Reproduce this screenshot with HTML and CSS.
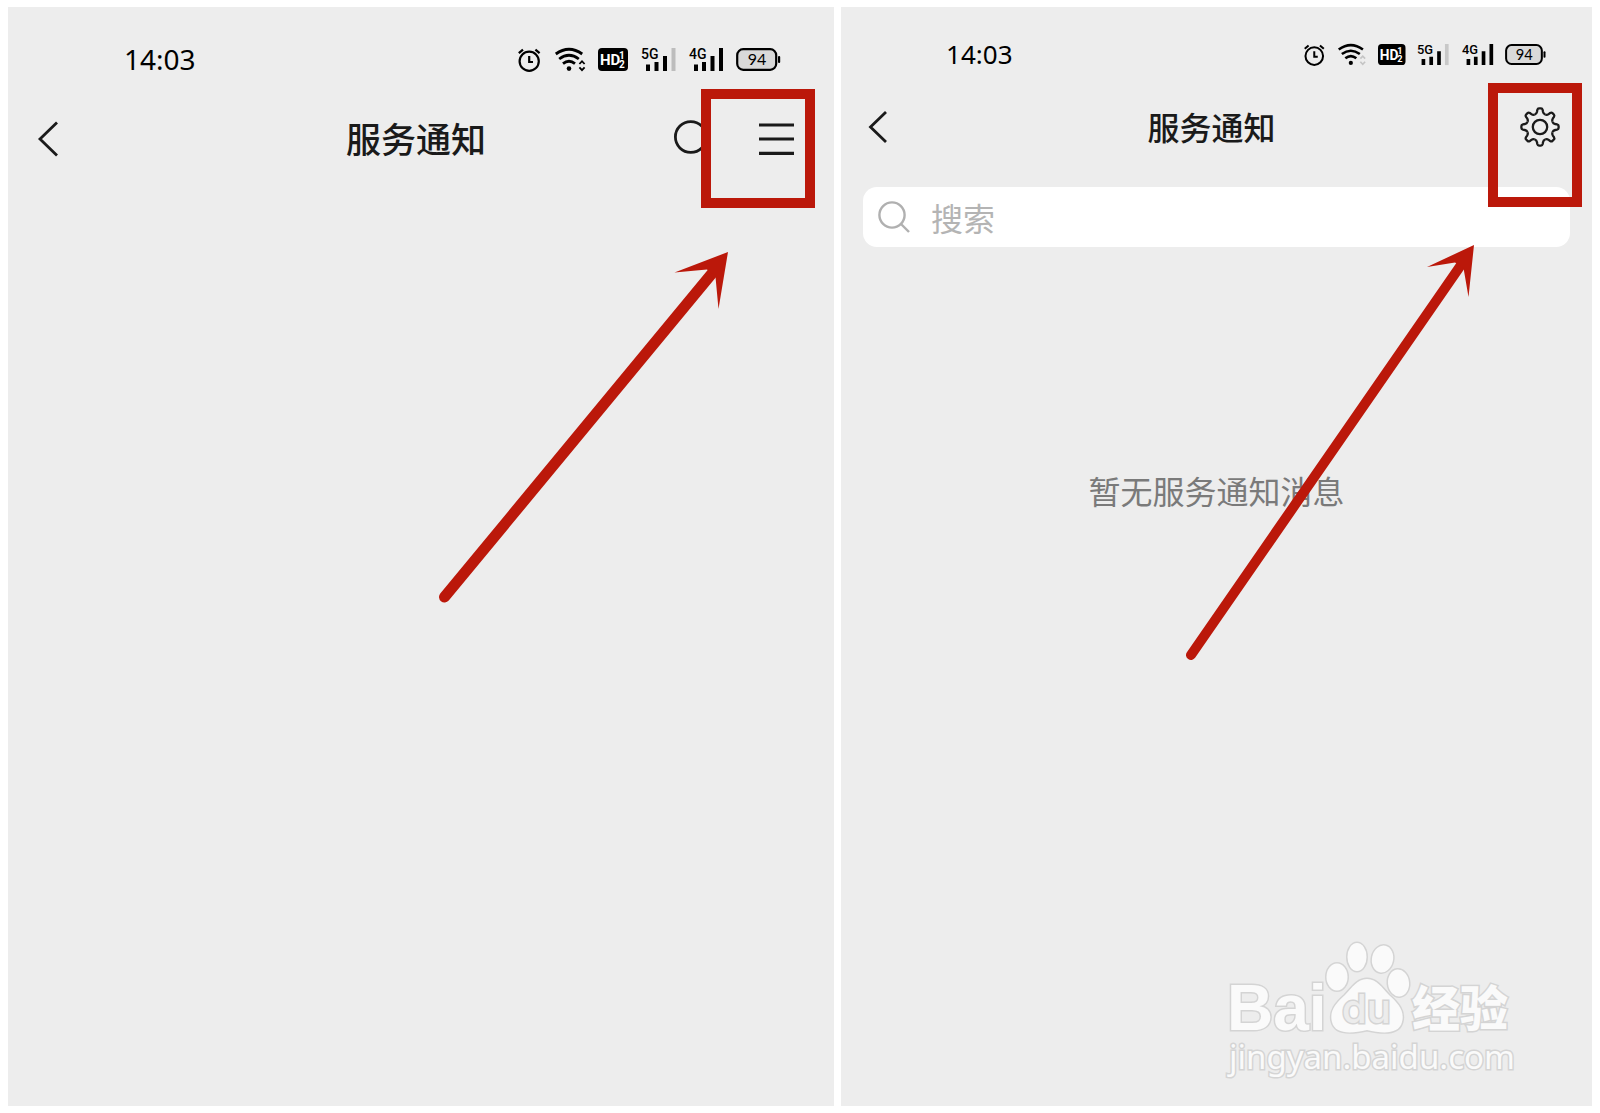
FILE: index.html
```html
<!DOCTYPE html>
<html lang="zh-CN">
  <head>
    <meta charset="UTF-8">
    <meta name="viewport" content="width=device-width, initial-scale=1.0">
    <title>服务通知</title>
    <link rel="stylesheet" href="styles.css">
  </head>
  <body>
    <main class="steps">
      <section class="phone phone-large">
        <div class="status">
          <time>14:03</time>
          <div class="status-icons">
            <svg viewBox="0 0 24 24">
              <g fill="none" stroke="#000" stroke-width="2.2">
                <circle cx="11.2" cy="13.2" r="9.6"/>
                <path d="M0.8 5.2L5 1.6M21.6 5.2L17.4 1.6M11.2 8V14H15"/>
              </g>
            </svg>
            <svg viewBox="0 0 30 24">
              <g fill="none" stroke="#000" stroke-width="2.8">
                <path d="M0.8 6Q14 -3.6 27.2 6M4.2 11Q14 3.6 23.8 11M8 15.6Q14 10.8 20 15.6"/>
                <path stroke-width="1.8" d="M24.4 16L27 13.2L29.6 16M24.4 19.4L27 22.2L29.6 19.4"/>
              </g>
              <circle cx="14" cy="20.6" r="2.3"/>
            </svg>
            <svg viewBox="0 0 30 24">
              <rect width="30" height="23" rx="4"/>
              <g class="glyph-hd">
                <text x="2" y="17" font-size="15">HD</text>
                <text x="21" y="11" font-size="10">1</text>
                <text x="21" y="20" font-size="10">2</text>
              </g>
            </svg>
            <svg viewBox="0 0 35 24">
              <text class="glyph" x="0" y="11" font-size="14">5G</text>
              <path d="M5 16.5h4v6.5h-4zM13.5 14h4v9h-4zM22 8h4v15h-4z"/>
              <path fill="#bdbdbd" d="M30.5 0h4v23h-4z"/>
            </svg>
            <svg viewBox="0 0 34 24">
              <text class="glyph" x="0" y="11" font-size="14">4G</text>
              <path d="M5 16.5h4v6.5h-4zM13 14h4v9h-4zM21.5 8h4v15h-4zM30 0h4v23h-4z"/>
            </svg>
            <svg viewBox="0 0 44 24">
              <rect x="1.2" y="1.2" width="39" height="20.6" rx="6" fill="#d9d9d9" stroke="#000" stroke-width="2.2"/>
              <rect x="42" y="8" width="2.2" height="7" rx="1"/>
              <text class="level" x="21" y="17" text-anchor="middle">94</text>
            </svg>
          </div>
        </div>
        <header class="nav">
          <button class="back" aria-label="返回">
            <svg width="20" height="36" viewBox="0 0 20 36"><path d="M19 1.5L2 18L19 34.5"/></svg>
          </button>
          <h1>服务通知</h1>
          <div class="actions">
            <button aria-label="搜索">
              <svg width="34" height="36" viewBox="0 0 34 36"><circle cx="16.8" cy="16" r="15.4"/><path d="M28 27L33 32"/></svg>
            </button>
            <button aria-label="菜单">
              <svg width="36" height="36" viewBox="0 0 36 36"><path stroke-width="3.2" d="M1 4H36M1 18H36M1 32.4H36"/></svg>
            </button>
          </div>
        </header>
        <div class="mark"></div>
        <svg class="arrow" width="290" height="352" viewBox="0 0 290 352">
          <path class="shaft" d="M6.5 345L276 19"/>
          <path d="M290 0L236.5 20.5L269 17.5L277.5 25L280.5 57Z"/>
        </svg>
      </section>

      <section class="phone phone-small">
        <div class="status">
          <time>14:03</time>
          <div class="status-icons">
            <svg viewBox="0 0 24 24">
              <g fill="none" stroke="#000" stroke-width="2.2">
                <circle cx="11.2" cy="13.2" r="9.6"/>
                <path d="M0.8 5.2L5 1.6M21.6 5.2L17.4 1.6M11.2 8V14H15"/>
              </g>
            </svg>
            <svg viewBox="0 0 30 24">
              <g fill="none" stroke="#000" stroke-width="2.8">
                <path d="M0.8 6Q14 -3.6 27.2 6M4.2 11Q14 3.6 23.8 11M8 15.6Q14 10.8 20 15.6"/>
                <path stroke="#c4c4c4" stroke-width="1.8" d="M24.4 16L27 13.2L29.6 16M24.4 19.4L27 22.2L29.6 19.4"/>
              </g>
              <circle cx="14" cy="20.6" r="2.3"/>
            </svg>
            <svg viewBox="0 0 30 24">
              <rect width="30" height="23" rx="4"/>
              <g class="glyph-hd">
                <text x="2" y="17" font-size="15">HD</text>
                <text x="21" y="11" font-size="10">1</text>
                <text x="21" y="20" font-size="10">2</text>
              </g>
            </svg>
            <svg viewBox="0 0 35 24">
              <text class="glyph" x="0" y="11" font-size="14">5G</text>
              <path d="M5 16.5h4v6.5h-4zM13.5 14h4v9h-4zM22 8h4v15h-4z"/>
              <path fill="#c8c8c8" d="M30.5 0h4v23h-4z"/>
            </svg>
            <svg viewBox="0 0 34 24">
              <text class="glyph" x="0" y="11" font-size="14">4G</text>
              <path d="M5 16.5h4v6.5h-4zM13 14h4v9h-4zM21.5 8h4v15h-4zM30 0h4v23h-4z"/>
            </svg>
            <svg viewBox="0 0 44 24">
              <rect x="1.2" y="1.2" width="39" height="20.6" rx="6" fill="#d9d9d9" stroke="#000" stroke-width="2.2"/>
              <rect x="42" y="8" width="2.2" height="7" rx="1"/>
              <text class="level" x="21" y="17" text-anchor="middle">94</text>
            </svg>
          </div>
        </div>
        <header class="nav">
          <button class="back" aria-label="返回">
            <svg width="24" height="32" viewBox="0 0 24 32"><path d="M23 1L7.5 16L23 31"/></svg>
          </button>
          <h1>服务通知</h1>
          <div class="actions">
            <button aria-label="设置">
              <svg width="40" height="40" viewBox="0 0 40 40">
                <g stroke-width="2.3">
                  <circle cx="20" cy="20" r="7.2"/>
                  <path id="tooth" d="M14.8 7.5Q16.6 6.8 17 4.8L17.3 3Q17.7 1.4 19 1.4H21Q22.3 1.4 22.7 3L23 4.8Q23.4 6.8 25.2 7.5"/>
                  <use href="#tooth" transform="rotate(45 20 20)"/>
                  <use href="#tooth" transform="rotate(90 20 20)"/>
                  <use href="#tooth" transform="rotate(135 20 20)"/>
                  <use href="#tooth" transform="rotate(180 20 20)"/>
                  <use href="#tooth" transform="rotate(225 20 20)"/>
                  <use href="#tooth" transform="rotate(270 20 20)"/>
                  <use href="#tooth" transform="rotate(315 20 20)"/>
                </g>
              </svg>
            </button>
          </div>
        </header>
        <div class="search">
          <label for="keyword" aria-label="搜索">
            <svg width="32" height="32" viewBox="0 0 32 32"><circle cx="13" cy="14" r="12.6"/><path d="M22 23L30 31"/></svg>
          </label>
          <input type="text" id="keyword" name="keyword" placeholder="搜索">
        </div>
        <p class="empty">暂无服务通知消息</p>
        <div class="mark"></div>
        <svg class="arrow" width="290" height="416" viewBox="0 0 290 416">
          <path class="shaft" d="M7 410L277 20"/>
          <path d="M290 0L243 22L271 17.5L279.5 23L284.5 52Z"/>
        </svg>
        <svg class="watermark" width="292" height="146" viewBox="0 0 292 146">
          <text class="wm-bai" x="3" y="92">Bai</text>
          <ellipse cx="113" cy="39" rx="10.5" ry="13.5"/>
          <ellipse cx="133" cy="19" rx="9.5" ry="14"/>
          <ellipse cx="158.5" cy="21" rx="10.5" ry="13.5" transform="rotate(12 158.5 21)"/>
          <ellipse cx="174.5" cy="45" rx="10.5" ry="13.5" transform="rotate(-6 174.5 45)"/>
          <path d="M143 41C153 41 158 50 165 57C174 65 181 73 178 84C175 96 160 96 143 92C126 96 111 96 108 84C105 73 112 65 121 57C128 50 133 41 143 41Z"/>
          <text class="wm-du" x="118" y="85">du</text>
          <text class="wm-cn" x="188" y="88">经验</text>
          <text class="wm-url" x="5" y="131">jingyan.baidu.com</text>
        </svg>
      </section>
    </main>
  </body>
</html>
```
FILE: styles.css
```css
body {
  margin: 0;
  font-family: "Noto Sans", "Noto Sans CJK SC", sans-serif;
  background-color: #fff;
  color: #1a1a1a;
}
svg {
  overflow: visible;
}
.steps {
  display: grid;
  grid-template-columns: 11fr 10fr;
  gap: 7px;
  min-height: 100vh;
  padding: 7px 8px;
  box-sizing: border-box;
}
.phone {
  position: relative;
  background-color: #ededed;
}

/* status bar */
.status {
  display: flex;
  align-items: center;
  justify-content: space-between;
  height: 32px;
  color: #000;
}
.phone-large .status {
  padding: 37px 54px 0 116px;
  font-size: 28px;
}
.phone-small .status {
  padding: 32px 47px 0 105px;
  font-size: 26px;
}
.status time {
  line-height: 32px;
  padding-bottom: 2px;
}
.status-icons {
  display: flex;
}
.phone-large .status-icons {
  gap: 13px;
}
.phone-small .status-icons {
  gap: 12px;
}
.phone-large .status-icons svg {
  height: 24px;
}
.phone-small .status-icons svg {
  height: 22px;
}
.glyph {
  font-family: Roboto, sans-serif;
  font-weight: 500;
}
.glyph-hd {
  font-family: Roboto, sans-serif;
  font-weight: 700;
  fill: #fff;
}
.level {
  font-family: Lato, sans-serif;
  font-size: 16px;
}

/* title bar */
.nav {
  display: grid;
  grid-template-columns: 1fr auto 1fr;
  align-items: center;
}
.phone-large .nav {
  height: 126px;
  padding: 0 40px 0 30px;
}
.phone-small .nav {
  height: 112px;
  padding: 0 32px 0 22px;
}
.nav h1 {
  margin: 0;
  padding-top: 2px;
  font-weight: 500;
  line-height: 40px;
}
.phone-large h1 {
  font-size: 35px;
}
.phone-small h1 {
  font-size: 32px;
}
.nav button {
  display: block;
  padding: 0;
  border: none;
  background: none;
  cursor: pointer;
}
.nav svg {
  display: block;
  fill: none;
  stroke: #1a1a1a;
  stroke-width: 2.8;
}
.actions {
  display: flex;
  justify-content: flex-end;
  gap: 50px;
}

/* search box */
.search {
  display: flex;
  align-items: center;
  gap: 20px;
  height: 60px;
  margin: 4px 22px 0;
  padding: 0 16px;
  border-radius: 14px;
  background-color: #fff;
}
.search svg {
  display: block;
  fill: none;
  stroke: #b0b0b0;
  stroke-width: 2.4;
}
.search input {
  flex: 1;
  min-width: 0;
  padding: 4px 0 0;
  border: none;
  outline: none;
  background: none;
  font-family: inherit;
  font-size: 32px;
  line-height: 40px;
}
.search input::placeholder {
  color: #b4b4b4;
}
.empty {
  margin: 225px 0 0;
  text-align: center;
  font-size: 32px;
  line-height: 40px;
  color: #7a7a7a;
}

/* red marks over the screens */
.mark {
  position: absolute;
  box-sizing: border-box;
  border: 10px solid #bb180a;
}
.phone-large .mark {
  top: 82px;
  right: 19px;
  width: 114px;
  height: 119px;
}
.phone-small .mark {
  top: 76px;
  right: 10px;
  width: 94px;
  height: 124px;
}
.arrow {
  position: absolute;
  fill: #bb180a;
}
.phone-large .arrow {
  top: 245px;
  right: 106px;
}
.phone-small .arrow {
  top: 238px;
  right: 118px;
}
.shaft {
  fill: none;
  stroke: #bb180a;
  stroke-width: 11;
  stroke-linecap: round;
}
.phone-small .shaft {
  stroke-width: 10;
}

/* watermark */
.watermark {
  position: absolute;
  right: 76px;
  bottom: 22px;
  fill: #fafafa;
  stroke: #d4d4d4;
  stroke-width: 3;
  paint-order: stroke;
}
.wm-bai {
  font: 700 64px "Liberation Sans", sans-serif;
}
.wm-du {
  font: 500 40px Inter, sans-serif;
  fill: #ececec;
}
.wm-cn {
  font: 900 48px "Noto Sans CJK SC", sans-serif;
}
.wm-url {
  font: 400 33px "Noto Sans", sans-serif;
}
```
